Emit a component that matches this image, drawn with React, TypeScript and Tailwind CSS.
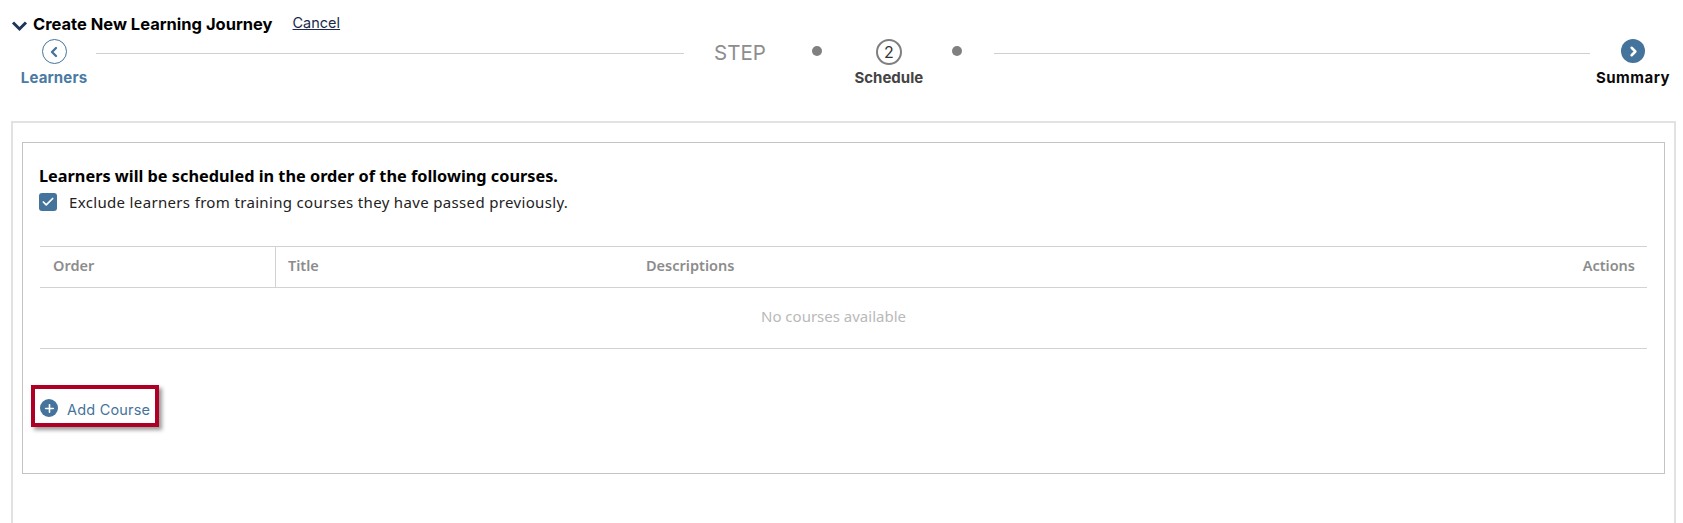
import { Check, ChevronLeft, ChevronRight, Plus } from "lucide-react";

/** One stop of the stepper: round marker with its label under it. */
function Stop({ marker, label, labelClass, width }: { marker: React.ReactNode; label: string; labelClass: string; width: string }) {
  return (
    <div className={`flex shrink-0 flex-col items-center ${width}`}>
      {marker}
      <span className={`mt-[5px] text-[15px] leading-[18px] font-bold ${labelClass}`}>{label}</span>
    </div>
  );
}

function Stepper() {
  return (
    <div className="flex h-[56px] items-start pr-[12px] pl-[21px]">
      <Stop
        width="w-[66px]"
        labelClass="text-[#4a7aa3] tracking-[0.15px]"
        label="Learners"
        marker={
          <span className="flex h-[25px] w-[25px] items-center justify-center rounded-full border border-[#44739c] text-[#44739c]">
            <ChevronLeft size={16} strokeWidth={3.5} />
          </span>
        }
      />
      <div className="mt-[14px] ml-[9px] h-px w-[588px] shrink-0 bg-[#cfcfcf]" />
      <span className="mt-[1px] ml-[30px] text-[20.5px] leading-[26px] text-[#8d8d8d]">STEP</span>
      <span className="mt-[7px] ml-[46px] h-[10px] w-[10px] rounded-full bg-[#808080]" />
      <Stop
        width="w-[66px] ml-[34px]"
        labelClass="text-[#444444]"
        label="Schedule"
        marker={
          <span className="-mb-px flex h-[26px] w-[26px] items-center justify-center rounded-full border-2 border-[#7f7f7f] text-[16px] leading-none text-[#333333]">
            2
          </span>
        }
      />
      <span className="mt-[7px] ml-[30px] h-[10px] w-[10px] rounded-full bg-[#808080]" />
      <div className="mt-[14px] ml-[32px] h-px flex-1 bg-[#cfcfcf]" />
      <Stop
        width="w-[76px] ml-[5px]"
        labelClass="text-[#0a0a0a] tracking-[0.5px]"
        label="Summary"
        marker={
          <span className="mb-px flex h-[24px] w-[24px] items-center justify-center rounded-full bg-[#44739c] text-white">
            <ChevronRight size={15} strokeWidth={4} />
          </span>
        }
      />
    </div>
  );
}

function CourseTable() {
  return (
    <div className="mt-[35px] mr-[17px] ml-[17px] font-['Noto_Sans',sans-serif] text-[14.5px]">
      <div className="flex h-[42px] items-center border-y border-[#d2d2d2] font-semibold text-[#8c8c8c]">
        <div className="flex h-full w-[236px] items-center border-r border-[#d2d2d2] pb-[3px] pl-[13px]">Order</div>
        <div className="w-[370px] pb-[3px] pl-[12px]">Title</div>
        <div className="flex-1 pb-[3px]">Descriptions</div>
        <div className="pr-[12px] pb-[3px]">Actions</div>
      </div>
      <div className="flex h-[61px] items-center justify-center border-b border-[#d2d2d2] pr-[20px] pb-[3px] text-[15px] text-[#b9b9b9]">
        No courses available
      </div>
    </div>
  );
}

export default function App() {
  return (
    <div className="h-[523px] w-[1683px] overflow-hidden bg-white font-['Inter',sans-serif]">
      <div className="flex h-[39px] items-start pt-[14px] pl-[11px]">
        <svg width="17" height="12" viewBox="0 0 17 12" fill="none" className="mt-[6px] text-[#1d3557]">
          <path d="M2 2.5 L8.5 9 L15 2.5" stroke="currentColor" strokeWidth="3" />
        </svg>
        <h1 className="ml-[5px] text-[16.5px] leading-[20px] font-bold text-black">Create New Learning Journey</h1>
        <a className="ml-[20px] text-[14.5px] leading-[18px] text-[#1b2a4a] underline">Cancel</a>
      </div>
      <Stepper />
      <div className="mt-[26px] mr-[7px] ml-[11px] h-[402px] border-x-2 border-t-2 border-[#e2e2e2] pt-[19px] pr-[9px] pl-[9px]">
        <div className="h-[332px] border border-[#c4c4c4] pt-[23px]">
          <p className="pl-[16px] font-['Noto_Sans',sans-serif] text-[16.3px] leading-[21px] font-bold text-black">
            Learners will be scheduled in the order of the following courses.
          </p>
          <label className="mt-[6px] flex items-center pl-[16px] font-['Noto_Sans',sans-serif] text-[15px] leading-[18px] tracking-[0.34px] text-[#222222]">
            <span className="flex h-[18px] w-[18px] items-center justify-center rounded-[3px] bg-[#44739c] text-white">
              <Check size={14} strokeWidth={3} />
            </span>
            <span className="ml-[12px]">Exclude learners from training courses they have passed previously.</span>
          </label>
          <CourseTable />
          <button className="mt-[36px] ml-[8px] flex h-[42px] w-[128px] items-center border-4 border-[#ae0025] pt-[4px] pl-[5px] text-[14.5px] tracking-[0.2px] text-[#44739c] shadow-[3px_3px_4px_rgba(0,0,0,0.4)]">
            <span className="flex h-[18px] w-[18px] items-center justify-center rounded-full bg-[#44739c] text-white">
              <Plus size={13} strokeWidth={3} />
            </span>
            <span className="mt-[4px] ml-[9px]">Add Course</span>
          </button>
        </div>
      </div>
    </div>
  );
}
